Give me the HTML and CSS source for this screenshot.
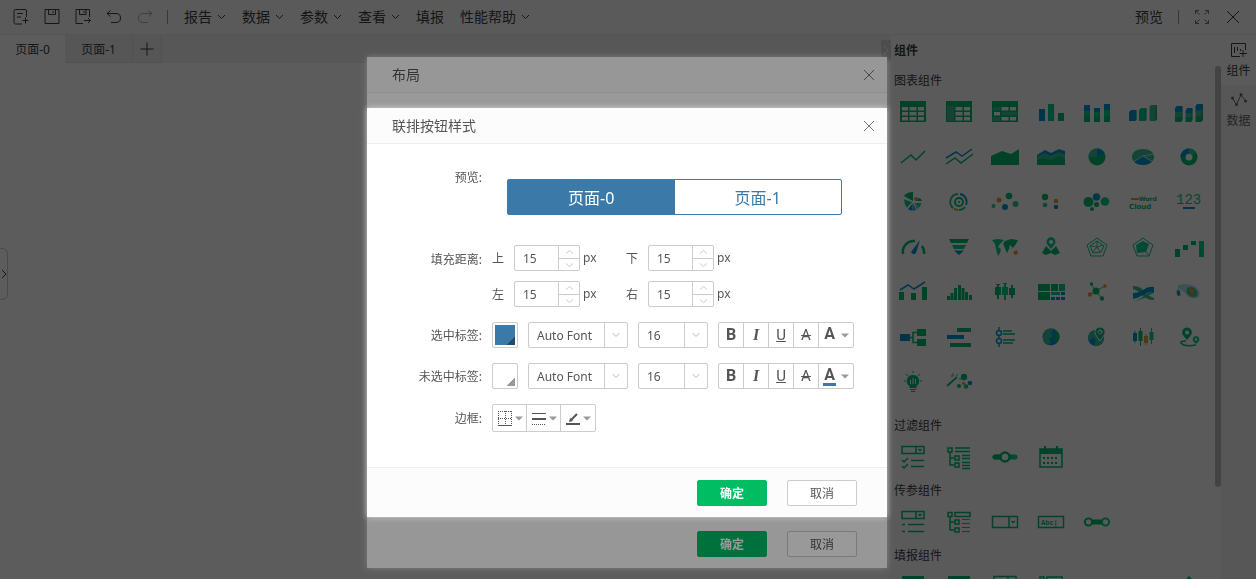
FILE: index.html
```html
<!DOCTYPE html>
<html lang="zh-CN">
<head>
<meta charset="utf-8">
<meta name="viewport" content="initial-scale=1.0, width=device-width">
<title>联排按钮样式</title>
<link rel="stylesheet" href="styles.css">
</head>
<body>

<div class="app">

<header class="toolbar">
  <button type="button" class="tool" aria-label="新建"><svg width="18" height="18" viewBox="0 0 18 18"><path d="M10 16H3.500Q2 16 2 14.500V3Q2 1.500 3.500 1.500H13Q14.500 1.500 14.500 3V9M5 5.500H11M5 9H9M10.500 12.500H16.500M13.500 9.500V15.500"/></svg></button>
  <button type="button" class="tool" aria-label="保存"><svg width="18" height="18" viewBox="0 0 18 18"><path d="M2 1.500H16V15.500H2ZM5.500 1.500V6.500H12.500V1.500M10 3V5"/></svg></button>
  <button type="button" class="tool" aria-label="另存为"><svg width="18" height="18" viewBox="0 0 18 18"><path d="M9 15.500H2V1.500H15.500V9M5.500 1.500V6.500H12V1.500M10 3V5M10 12.500H16.500M14 10L16.500 12.500L14 15"/></svg></button>
  <button type="button" class="tool" aria-label="撤销"><svg width="18" height="18" viewBox="0 0 18 18"><path d="M5.500 2.500L2 5.500L5.500 8.500M2 5.500H11Q15.500 5.500 15.500 10Q15.500 14.500 11 14.500H6"/></svg></button>
  <button type="button" class="tool off" aria-label="重做"><svg width="18" height="18" viewBox="0 0 18 18"><path d="M12.500 2.500L16 5.500L12.500 8.500M16 5.500H7Q2.500 5.500 2.500 10Q2.500 14.500 7 14.500H12"/></svg></button>
  <span class="sep"></span>
  <nav class="menus">
    <button type="button">报告<svg width="9" height="6" viewBox="0 0 9 6"><path d="M1 1L4.500 4.500L8 1"/></svg></button>
    <button type="button">数据<svg width="9" height="6" viewBox="0 0 9 6"><path d="M1 1L4.500 4.500L8 1"/></svg></button>
    <button type="button">参数<svg width="9" height="6" viewBox="0 0 9 6"><path d="M1 1L4.500 4.500L8 1"/></svg></button>
    <button type="button">查看<svg width="9" height="6" viewBox="0 0 9 6"><path d="M1 1L4.500 4.500L8 1"/></svg></button>
    <button type="button">填报</button>
    <button type="button">性能帮助<svg width="9" height="6" viewBox="0 0 9 6"><path d="M1 1L4.500 4.500L8 1"/></svg></button>
  </nav>
  <div class="right">
    <button type="button">预览</button>
    <span class="sep"></span>
    <button type="button" class="dim" aria-label="全屏"><svg width="16" height="16" viewBox="0 0 16 16"><path d="M1.500 5V1.500H5M1.500 1.500L5.500 5.500M11 1.500H14.500V5M14.500 1.500L10.500 5.500M1.500 11V14.500H5M1.500 14.500L5.500 10.500M11 14.500H14.500V11M14.500 14.500L10.500 10.500"/></svg></button>
    <button type="button" aria-label="关闭"><svg width="16" height="16" viewBox="0 0 16 16"><path d="M2 2L14 14M14 2L2 14"/></svg></button>
  </div>
</header>

<div class="work">
  <main class="canvas">
    <div class="tabs">
      <button type="button" class="on">页面-0</button>
      <button type="button">页面-1</button>
      <button type="button" class="add" aria-label="添加页面"><svg width="14" height="14" viewBox="0 0 14 14"><path d="M7 0.500V13.500M0.500 7H13.500"/></svg></button>
    </div>
    <button type="button" class="drawer" aria-label="展开"><svg width="6" height="10" viewBox="0 0 6 10"><path d="M1 1L5 5L1 9"/></svg></button>
    <button type="button" class="fold" aria-label="收起"><svg width="6" height="10" viewBox="0 0 6 10"><path d="M1 1L5 5L1 9"/></svg></button>
  </main>

  <aside class="panel">
    <h2>组件</h2>
    <h3>图表组件</h3>
    <div class="icons charts">
      <svg viewBox="0 0 28 24"><path class="g" fill-rule="evenodd" d="M1 1H27V22H1ZM3 7V10.500H9V7ZM10.500 7V10.500H17.500V7ZM19 7V10.500H25V7ZM3 12V15.500H9V12ZM10.500 12V15.500H17.500V12ZM19 12V15.500H25V12ZM3 17V20.500H9V17ZM10.500 17V20.500H17.500V17ZM19 17V20.500H25V17Z"/></svg>
      <svg viewBox="0 0 28 24"><path class="g" fill-rule="evenodd" d="M1 1H27V22H1ZM10.500 7V10.500H17.500V7ZM19 7V10.500H25V7ZM10.500 12V15.500H17.500V12ZM19 12V15.500H25V12ZM10.500 17V20.500H17.500V17ZM19 17V20.500H25V17Z"/><path class="l" d="M2 6H9V21H2Z"/></svg>
      <svg viewBox="0 0 28 24"><path class="g" fill-rule="evenodd" d="M1 1H27V22H1ZM10.500 7V10.500H17.500V7ZM19 7V10.500H25V7ZM3 12V15.500H9V12ZM10.500 17V20.500H17.500V17ZM19 17V20.500H25V17Z"/><path class="l" d="M2 7H9V10.500H2ZM10.500 12H26V15.500H10.500ZM2 17H9V21H2Z"/></svg>
      <svg viewBox="0 0 28 24"><path class="b" d="M2 9H8V21H2Z"/><path class="m" d="M11 4H17V21H11Z"/><path class="g" d="M21 13H27V21H21Z"/></svg>
      <svg viewBox="0 0 28 24"><path class="b" d="M1 5H7V11H1ZM11 8H17V12H11ZM21 4H27V10H21Z"/><path class="m" d="M1 11H7V16H1ZM11 12H17V16H11ZM21 10H27V16H21Z"/><path class="g" d="M1 16H7V22H1ZM11 16H17V22H11ZM21 16H27V22H21Z"/></svg>
      <svg viewBox="0 0 28 24"><path class="b" d="M0 12L2 10H7.500V20L6 21H0Z"/><path class="m" d="M10 10L12 8H17.500V20L16 21H10Z"/><path class="l" d="M20.500 7L22 5H28V20L26 21H20.500Z"/><path class="d" d="M6 12L7.500 10V20L6 21ZM16 10L17.500 8V20L16 21ZM26 7L28 5V20L26 21Z"/></svg>
      <svg viewBox="0 0 28 24"><path class="b" d="M0 8L2 6H7.500V12H0ZM10.500 11L12 8H17.500V13H10.500ZM20.500 6L22 4H28V10L20.500 12Z"/><path class="l" d="M0 12H7.500V17H0ZM10.500 13H17.500V17H10.500ZM20.500 11L28 10V16H20.500Z"/><path class="g" d="M0 17H7.500V20L6 22H0ZM10.500 17H17.500V20L16 22H10.500ZM20.500 16H28V20L26 22H20.500Z"/><path class="d" d="M6 8L7.500 6V20L6 22ZM16 11L17.500 8V20L16 22ZM26 6L28 4V20L26 22Z"/></svg>

      <svg viewBox="0 0 28 24"><path class="gs" d="M2 18L12 10L17 15L26 6"/></svg>
      <svg viewBox="0 0 28 24"><path class="bs" d="M1 13L11 7L17 11L27 4"/><path class="gs" d="M1 19L10 13L16 18L28 9"/></svg>
      <svg viewBox="0 0 28 24"><path class="g" d="M0 11L11 6L20 9L28 4V20H0Z"/></svg>
      <svg viewBox="0 0 28 24"><path class="b" d="M0 10L8 5L14 8L22 4L28 6V13H0Z"/><path class="l" d="M0 12L7 8L14 11L22 7L28 10V17H0Z"/><path class="g" d="M0 15L7 13L14 15L22 11L28 14V20H0Z"/></svg>
      <svg viewBox="0 0 28 24"><circle class="g" cx="14" cy="12" r="8.500"/><path class="l" d="M14 12V3.500A8.500 8.500 0 0 0 5.500 12Z"/><path class="b" d="M14 12V3.500A8.500 8.500 0 0 1 21.500 8Z"/></svg>
      <svg viewBox="0 0 28 24"><ellipse class="m" cx="14" cy="12.500" rx="11" ry="7.500"/><ellipse class="l" cx="14" cy="11" rx="11" ry="7"/><path class="b" d="M14 11L5 17Q14 23 23 17Z"/><path class="hair" d="M14 11L4 17M14 11L24 17M14 11L25 9"/></svg>
      <svg viewBox="0 0 28 24"><circle class="ring g" cx="14" cy="12" r="6"/><path class="ring l" d="M14 6A6 6 0 0 1 19 9"/><path class="ring b" d="M8 12A6 6 0 0 1 14 6"/></svg>

      <svg viewBox="0 0 28 24"><path class="g" d="M14 11L5 6Q8 2 14 2Z"/><path class="m" d="M13 12L5 9Q5 14 8 18Z"/><path class="b" d="M14 13L9 19Q13 22 17 20Z"/><path class="l" d="M15 13L18 19Q22 17 22 13Z"/><path class="g" d="M16 11H23Q22 8 20 8Z"/><circle class="o" cx="17" cy="9" r="2"/><path class="hair" d="M14 12L5 9M14 12L8 18M14 12L14 21M14 12L20 18M14 12H22"/></svg>
      <svg viewBox="0 0 28 24"><circle class="line2 g" cx="14" cy="12" r="4"/><path class="line2 m" d="M13 4A8 8 0 0 0 8 18"/><path class="line2 b" d="M15 4A8 8 0 0 1 21 15"/><path class="line2 g" d="M20 17A8 8 0 0 1 14 20"/><path class="line2 o" d="M9 18.500A8 8 0 0 0 13 20"/><circle class="g" cx="14" cy="12" r="1"/></svg>
      <svg viewBox="0 0 28 24"><circle class="l" cx="2.500" cy="16" r="2"/><circle class="o" cx="8" cy="10" r="2.500"/><circle class="b" cx="14" cy="17" r="3"/><circle class="g" cx="18" cy="6" r="3.300"/><circle class="l" cx="24.500" cy="14" r="3"/></svg>
      <svg viewBox="0 0 28 24"><circle class="g" cx="8" cy="7" r="3.200"/><circle class="l" cx="8" cy="15" r="2.300"/><circle class="o" cx="19" cy="11" r="2.300"/><circle class="b" cx="19" cy="17" r="2.300"/></svg>
      <svg viewBox="0 0 28 24"><circle class="g" cx="5.500" cy="12" r="5"/><circle class="b" cx="13.500" cy="7" r="3.700"/><circle class="m" cx="22" cy="11.500" r="4.300"/><circle class="g" cx="13.500" cy="14.500" r="2.600"/><circle class="g" cx="9" cy="19" r="2"/></svg>
      <svg viewBox="0 0 28 24"><path class="o" d="M2 8H10V10H2Z"/><text class="g cloud" x="10" y="11" font-size="6">Word</text><text class="g cloud" x="0" y="19" font-size="7">Cloud</text></svg>
      <svg viewBox="0 0 28 24"><text class="m num" x="1" y="14" font-size="14">123</text><path class="b" d="M8 17H20V19H8Z"/></svg>

      <svg viewBox="0 0 28 24"><path class="gauge g" d="M4 19A11 11 0 0 1 16 6"/><path class="gauge g" d="M23 11A11 11 0 0 1 25 19"/><path class="b" d="M21 5L17 18Q14 21 12 17Z"/></svg>
      <svg viewBox="0 0 28 24"><path class="g" d="M4 4H24L22 8H6Z"/><path class="m" d="M7 10H21L19 14H9Z"/><path class="b" d="M9 15.500H19L14 20Z"/></svg>
      <svg viewBox="0 0 28 24"><path class="m" d="M1 5L7 4L13 5L9 9L7 12L10 14L9 18L7 21L5 14L4 9Z"/><path class="g" d="M14 6L20 4L27 5L25 9L22 13L19 10L18 14L16 18L13 11L12 9Z"/><path class="o" d="M22 17L26 15L27 19L24 20Z"/></svg>
      <svg viewBox="0 0 28 24"><path class="m" fill-rule="evenodd" d="M14 2A5 5 0 0 1 18 9L14 14L10 9A5 5 0 0 1 14 2ZM14 5A2 2 0 1 0 14.100 5Z"/><path class="g" d="M9 11L14 16L19 11L23 18L18 20L14 18L9 20L5 18Z"/></svg>
      <svg viewBox="0 0 28 24"><path class="line1 m" d="M14 3L24 10L20 21H8L4 10ZM14 6L21 11L18 17L10 18L7 11Z"/><path class="line1 l" d="M14 7V12L20 10M14 12L17 17M14 12L10 17M14 12L8 11"/></svg>
      <svg viewBox="0 0 28 24"><path class="line1 m" d="M14 3L24 10L20 21H8L4 10Z"/><path class="m" d="M14 6L20 9L17 17L8 18L7 10Z"/><path class="line1 l" d="M17 17L20 21"/></svg>
      <svg viewBox="0 0 28 24"><path class="g" d="M0 14H5V22H0ZM8 10H13V15H8ZM16 6H21V10H16Z"/><path class="m" d="M24 6H29V22H24Z"/></svg>

      <svg viewBox="0 0 28 24"><path class="bs" d="M1 10L9 5L15 9L26 2"/><path class="g" d="M0 12H5V20H0ZM12 13H17V20H12ZM23 7H28V20H23Z"/></svg>
      <svg viewBox="0 0 28 24"><path class="g" d="M2 16H5V20H2ZM5.500 13H8.500V20H5.500ZM9 8H12V20H9ZM13 5H16V20H13ZM16.500 8H19.500V20H16.500ZM20 12H23V20H20ZM24 15H27V20H24Z"/></svg>
      <svg viewBox="0 0 28 24"><path class="g" d="M4 7H10V15H4ZM6 4H8V19H6ZM5 4H9V5H5ZM18 8H24V15H18ZM20 5H22V18H20Z"/><path class="m" d="M11 7H17V15H11ZM13 3H15V20H13ZM12 3H16V4H12Z"/></svg>
      <svg viewBox="0 0 28 24"><path class="g" d="M1 4H13V11H1ZM1 12H13V20H1ZM14 4H21V11H14Z"/><path class="m" d="M22 4H28V11H22ZM14 12H23V15H14Z"/><path class="b" d="M24 12H28V15H24ZM14 17H18V20H14ZM19 17H23V20H19ZM24 17H28V20H24Z"/></svg>
      <svg viewBox="0 0 28 24"><path class="line1 l" d="M13 11L8 4M13 11L22 6M13 11L7 15M13 11L19 19"/><circle class="g" cx="13" cy="11" r="3.500"/><circle class="g" cx="8.500" cy="4" r="1.700"/><circle class="o" cx="22" cy="6" r="1.700"/><circle class="o" cx="7" cy="14.500" r="2.200"/><circle class="g" cx="19" cy="18.500" r="2.200"/></svg>
      <svg viewBox="0 0 28 24"><path class="l" d="M4 6Q11 6 15 11Q19 16 25 18V20Q17 20 12 14Q8 10 4 9Z"/><path class="b" d="M25 7V12Q18 12 14 15Q9 18 4 19V13Q10 13 14 10Q19 6 25 7Z"/><path class="l" d="M4 21Q11 20 15 16Q19 12 25 12V13Q19 15 15 18Q10 21 4 21Z"/></svg>
      <svg viewBox="0 0 28 24"><path class="haze" d="M3 5Q13 2 21 7Q28 14 22 18Q14 20 9 12L3 8ZM2 8Q6 11 6 16Q4 18 1 13Z"/><ellipse class="l" cx="17" cy="12" rx="6" ry="4.500" transform="rotate(35 17 12)"/><path class="o" d="M14 8Q21 9 19 14Q15 15 14 8Z"/><ellipse class="b" cx="3.500" cy="13" rx="1.500" ry="3"/></svg>

      <svg viewBox="0 0 28 24"><path class="b" d="M1 9H11V16H1Z"/><path class="gs" d="M11 12.500H14M18 7.500H14V17.500H18"/><path class="g" d="M18 4H27V11H18ZM18 14H27V21H18Z"/></svg>
      <svg viewBox="0 0 28 24"><path class="g" d="M12 3H26V7H12ZM5 18H26V22H5Z"/><path class="b" d="M2 10H19V14H2Z"/></svg>
      <svg viewBox="0 0 28 24"><path class="gs" d="M8 2V22M12 6H21M12 9H24M12 15H24M12 18H22"/><circle class="node" cx="8" cy="8" r="2.500"/><circle class="node" cx="8" cy="16" r="2.500"/></svg>
      <svg viewBox="0 0 28 24"><circle class="b" cx="14" cy="12" r="8.500"/><path class="l" d="M7 7Q11 2 17 4L14 8L16 11L12 14L14 18L11 20Q6 18 6 14Z"/><path class="g" d="M17 4Q23 7 22.500 13L19 17L16 12L19 9Z"/></svg>
      <svg viewBox="0 0 28 24"><circle class="b" cx="13" cy="13" r="8"/><path class="l" d="M9 6Q4 10 6 16L10 12L13 15L11 21Q19 21 21 15L15 11Z"/><path class="g edge" fill-rule="evenodd" d="M17 2A5 5 0 0 1 21.500 9.500L17 16L12.500 9.500A5 5 0 0 1 17 2ZM17 5A2 2 0 1 0 17.100 5Z"/></svg>
      <svg viewBox="0 0 28 24"><path class="b" d="M4 8H8V16H4ZM5.500 6H6.500V18H5.500Z"/><path class="g" d="M9.500 6H13.500V16H9.500ZM11 3H12V21H11Z"/><path class="o" d="M15 11H19V18H15ZM16.500 9H17.500V20H16.500Z"/><path class="m" d="M20.500 7H24.500V15H20.500ZM22 3H23V19H22Z"/></svg>
      <svg viewBox="0 0 28 24"><path class="g" fill-rule="evenodd" d="M12 2.500A5 5 0 0 1 16.500 9.500L12 15L7.500 9.500A5 5 0 0 1 12 2.500ZM12 5.500A2 2 0 1 0 12.100 5.500Z"/><path class="m" fill-rule="evenodd" d="M21 11A3.500 3.500 0 0 1 24 16L21 19L18 16A3.500 3.500 0 0 1 21 11ZM21 13A1.300 1.300 0 1 0 21.100 13Z"/><path class="gs" d="M11 16Q5 16 6 18Q9 22 21 20"/></svg>

      <svg viewBox="0 0 28 24"><path class="g" d="M14 5A6 6 0 0 1 17.500 16V18H10.500V16A6 6 0 0 1 14 5ZM11 19H17V20H11ZM12 21H16V22H12Z"/><path class="line1 g" d="M14 1V3M7 4L9 6M21 4L19 6M5 11H7M21 11H23"/><path class="bg" d="M11 10H12V14H11ZM13.500 8H14.500V14H13.500ZM16 9H17V14H16Z"/></svg>
      <svg viewBox="0 0 28 24"><path class="line2 g" d="M2 16L12 7"/><path class="line1 m" d="M8 3V6M13 4L11 6M14 9H16"/><circle class="g" cx="19" cy="7" r="3.200"/><circle class="o" cx="18.500" cy="13.500" r="1.600"/><circle class="b" cx="25" cy="13" r="2.300"/><circle class="g" cx="14" cy="16" r="2.100"/><circle class="m" cx="21" cy="16.500" r="2.200"/><circle class="o" cx="7" cy="6" r="1"/></svg>
    </div>

    <h3>过滤组件</h3>
    <div class="icons">
      <svg viewBox="0 0 28 24"><path class="gs" d="M3 1.500H25V8.500H3ZM17 1.500V8.500M19.500 4L21 5.500L22.500 4M3 15L5 17L9 13M12 15.500H25M3 21L5 23L9 19M12 21.500H25"/></svg>
      <svg viewBox="0 0 28 24"><path class="gs" d="M3 3H7V7H3ZM10 3H25M10 6.500H25M5 7V20H9M5 13H9M10 11H14V15H10ZM10 18H14V22H10ZM17 10.500H25M17 13.500H25M17 17.500H25M17 20.500H25M17 23.500H25"/></svg>
      <svg viewBox="0 0 28 24"><path class="thick m" d="M4 12H24"/><path class="thick g" d="M4 12H9"/><circle class="knob" cx="14" cy="12" r="4.500"/></svg>
      <svg viewBox="0 0 28 24"><path class="gs" d="M3 4H25V22H3Z"/><path class="g" d="M3 4H25V9H3ZM7 1H9V6H7ZM19 1H21V6H19ZM6 12H8V14H6ZM10 12H12V14H10ZM14 12H16V14H14ZM18 12H20V14H18ZM6 17H8V19H6ZM10 17H12V19H10ZM14 17H16V19H14ZM18 17H20V19H18Z"/></svg>
    </div>

    <h3>传参组件</h3>
    <div class="icons">
      <svg viewBox="0 0 28 24"><path class="gs" d="M3 1.500H25V8.500H3ZM17 1.500V8.500M19.500 4L21 5.500L22.500 4M3 14.500H6M9 14.500H25M3 21.500H6M9 21.500H25"/></svg>
      <svg viewBox="0 0 28 24"><path class="gs" d="M3 2.500H7V6.500H3ZM10 2.500H25V6.500H10ZM5 7V20H9M5 12H9M10 10H14V14H10ZM10 18H14V22H10Z"/><path class="line1 m" d="M17 9.500H25M17 13.500H25M17 17.500H25M17 21.500H25"/></svg>
      <svg viewBox="0 0 28 24"><path class="gs" d="M1.500 6.500H26.500V17.500H1.500ZM18 6.500V17.500M20.500 11L22 12.500L24 11"/></svg>
      <svg viewBox="0 0 28 24"><path class="gs" d="M1.500 6.500H26.500V17.500H1.500Z"/><text class="g mono" x="4" y="15" font-size="7">Abc|</text></svg>
      <svg viewBox="0 0 28 24"><path class="thick g" d="M10 12H18"/><circle class="loop g" cx="5.500" cy="12" r="3.500"/><circle class="loop m" cx="22.500" cy="12" r="3.500"/><circle class="bg" cx="5.500" cy="12" r="2.500"/><circle class="bg" cx="22.500" cy="12" r="2.500"/></svg>
    </div>

    <h3>填报组件</h3>
    <div class="icons">
      <svg viewBox="0 0 28 24"><path class="g" d="M3 1H25V22H3Z"/></svg>
      <svg viewBox="0 0 28 24"><path class="g" d="M3 1H25V22H3Z"/></svg>
      <svg viewBox="0 0 28 24"><path class="gs" d="M3 1.500H25V10H3ZM17 1.500V10"/></svg>
      <svg viewBox="0 0 28 24"><path class="gs" d="M3 2H7V6H3ZM10 2H25V6H10Z"/></svg>
      <svg viewBox="0 0 28 24"></svg>
      <svg viewBox="0 0 28 24"></svg>
      <svg viewBox="0 0 28 24"><path class="g" d="M14 1L18 5V20H10V5Z"/></svg>
    </div>
    <span class="thumb"></span>
  </aside>

  <div class="side">
    <button type="button" class="on"><svg width="18" height="16" viewBox="0 0 18 16"><path d="M10 14.500H1.500V1.500H15.500V8M4.500 5V11M7.500 5V9M10.500 7V9M13 8V15M9.500 11.500H17"/></svg>组件</button>
    <button type="button"><svg width="18" height="16" viewBox="0 0 18 16"><path d="M2.500 6.500L6.500 12.500L11 3L15.500 8.500"/><circle class="dot" cx="2.500" cy="6" r="1.500"/><circle class="dot" cx="6.500" cy="12.500" r="1.500"/><circle class="dot" cx="11" cy="2.500" r="1.500"/><circle class="dot" cx="15.500" cy="9" r="1.500"/></svg>数据</button>
  </div>
</div>
</div>

<div class="mask">
  <section class="dialog layout">
    <header><h1>布局</h1><button type="button" aria-label="关闭"><svg width="12" height="12" viewBox="0 0 12 12"><path d="M1 1L11 11M11 1L1 11"/></svg></button></header>
    <div class="body"></div>
    <footer><button type="button" class="ok">确定</button><button type="button" class="cancel">取消</button></footer>
  </section>
</div>

<div class="mask top">
  <section class="dialog">
    <header><h1>联排按钮样式</h1><button type="button" aria-label="关闭"><svg width="12" height="12" viewBox="0 0 12 12"><path d="M1 1L11 11M11 1L1 11"/></svg></button></header>
    <form class="body">
      <div class="row preview">
        <span class="label">预览:</span>
        <div class="seg"><button type="button" class="on">页面-0</button><button type="button">页面-1</button></div>
      </div>

      <div class="row pad">
        <span class="label">填充距离:</span>
        <div class="pads">
          <div class="spin"><label for="top">上</label><span class="num-box"><input id="top" type="text" value="15"><button type="button" aria-label="加"><svg width="9" height="6" viewBox="0 0 9 6"><path d="M1 4.500L4.500 1.500L8 4.500"/></svg></button><button type="button" aria-label="减"><svg width="9" height="6" viewBox="0 0 9 6"><path d="M1 1.500L4.500 4.500L8 1.500"/></svg></button></span>px</div>
          <div class="spin"><label for="bottom">下</label><span class="num-box"><input id="bottom" type="text" value="15"><button type="button" aria-label="加"><svg width="9" height="6" viewBox="0 0 9 6"><path d="M1 4.500L4.500 1.500L8 4.500"/></svg></button><button type="button" aria-label="减"><svg width="9" height="6" viewBox="0 0 9 6"><path d="M1 1.500L4.500 4.500L8 1.500"/></svg></button></span>px</div>
          <div class="spin"><label for="left">左</label><span class="num-box"><input id="left" type="text" value="15"><button type="button" aria-label="加"><svg width="9" height="6" viewBox="0 0 9 6"><path d="M1 4.500L4.500 1.500L8 4.500"/></svg></button><button type="button" aria-label="减"><svg width="9" height="6" viewBox="0 0 9 6"><path d="M1 1.500L4.500 4.500L8 1.500"/></svg></button></span>px</div>
          <div class="spin"><label for="right">右</label><span class="num-box"><input id="right" type="text" value="15"><button type="button" aria-label="加"><svg width="9" height="6" viewBox="0 0 9 6"><path d="M1 4.500L4.500 1.500L8 4.500"/></svg></button><button type="button" aria-label="减"><svg width="9" height="6" viewBox="0 0 9 6"><path d="M1 1.500L4.500 4.500L8 1.500"/></svg></button></span>px</div>
        </div>
      </div>

      <div class="row">
        <label class="label" for="font-on">选中标签:</label>
        <button type="button" class="swatch blue" aria-label="颜色"><i></i></button>
        <span class="drop"><select id="font-on"><option>Auto Font</option></select><svg width="9" height="6" viewBox="0 0 9 6"><path d="M1 1L4.500 4.500L8 1"/></svg></span>
        <span class="drop size"><select aria-label="字号"><option>16</option></select><svg width="9" height="6" viewBox="0 0 9 6"><path d="M1 1L4.500 4.500L8 1"/></svg></span>
        <div class="group">
          <button type="button"><b>B</b></button><button type="button"><em>I</em></button><button type="button"><u>U</u></button><button type="button"><s>A</s></button><button type="button" class="wide"><b class="ink">A</b><svg class="caret" width="8" height="5" viewBox="0 0 8 5"><path d="M0 0.500H8L4 4.500Z"/></svg></button>
        </div>
      </div>

      <div class="row">
        <label class="label" for="font-off">未选中标签:</label>
        <button type="button" class="swatch" aria-label="颜色"><i></i></button>
        <span class="drop"><select id="font-off"><option>Auto Font</option></select><svg width="9" height="6" viewBox="0 0 9 6"><path d="M1 1L4.500 4.500L8 1"/></svg></span>
        <span class="drop size"><select aria-label="字号"><option>16</option></select><svg width="9" height="6" viewBox="0 0 9 6"><path d="M1 1L4.500 4.500L8 1"/></svg></span>
        <div class="group">
          <button type="button"><b>B</b></button><button type="button"><em>I</em></button><button type="button"><u>U</u></button><button type="button"><s>A</s></button><button type="button" class="wide"><b class="ink under">A</b><svg class="caret" width="8" height="5" viewBox="0 0 8 5"><path d="M0 0.500H8L4 4.500Z"/></svg></button>
        </div>
      </div>

      <div class="row">
        <span class="label">边框:</span>
        <div class="group borders">
          <button type="button" aria-label="边框位置"><svg width="16" height="16" viewBox="0 0 16 16"><path class="dots" d="M1 1.500H15M1 8.500H15M1.500 1V14M8.500 1V14M14.500 1V14"/><path d="M1 15.500H15"/></svg><svg class="caret" width="8" height="5" viewBox="0 0 8 5"><path d="M0 0.500H8L4 4.500Z"/></svg></button><button type="button" aria-label="线型"><svg width="16" height="16" viewBox="0 0 16 16"><path d="M1 3.500H15"/><path class="bold" d="M1 9H15"/><path class="dots" d="M1 14.500H15"/></svg><svg class="caret" width="8" height="5" viewBox="0 0 8 5"><path d="M0 0.500H8L4 4.500Z"/></svg></button><button type="button" aria-label="线条颜色"><svg width="16" height="16" viewBox="0 0 16 16"><path class="bold" d="M1 14H15M6 10L12 4"/><path class="solid" d="M4 12L5 8L8 11Z"/></svg><svg class="caret" width="8" height="5" viewBox="0 0 8 5"><path d="M0 0.500H8L4 4.500Z"/></svg></button>
        </div>
      </div>
    </form>
    <footer><button type="button" class="ok">确定</button><button type="button" class="cancel">取消</button></footer>
  </section>
</div>

</body>
</html>
```

FILE: styles.css
```css
html,body,h1,h2,h3{margin:0;padding:0;}
*{box-sizing:border-box;}
body{
  color:#3d3d3d;
  font:12px/20px "Noto Sans","Noto Sans CJK SC",sans-serif;
  background:#fff;
  overflow:hidden;
}
button,input,select{font:inherit;color:inherit;margin:0;padding:0;border:0;background:none;border-radius:0;outline:none;}
button{display:flex;align-items:center;justify-content:center;flex:none;}
svg{fill:none;stroke:currentColor;flex:none;display:block;}

/* editor */
.app{height:100vh;display:flex;flex-direction:column;isolation:isolate;}
.toolbar{
  height:35px;
  flex:none;
  display:flex;
  align-items:center;
  padding:0 15px 0 12px;
  font-size:14px;
  background:#f9fafc;
  border-bottom:1px solid #eaebed;
}
.tool{width:18px;margin-right:13px;}
.off{opacity:0.4;}
.dim{color:#777;}
.sep{width:1px;height:14px;background:#999;}
.menus{display:flex;gap:16px;margin-left:16px;}
.menus button{gap:5px;}
.right{display:flex;align-items:center;gap:15px;margin-left:auto;}
.work{flex:1;min-height:0;display:flex;}
.canvas{flex:1;position:relative;background:#fff;}
.tabs{display:flex;height:28px;background:#f1f1f1;}
.tabs button{width:68px;padding-top:2px;background:#ededed;border:solid #e0e0e0;border-width:0 1px 1px 0;}
.tabs .on{width:65px;background:#fff;border:0;}
.tabs .add{width:29px;padding-top:0;}
.drawer{
  position:absolute;left:0;top:213px;
  width:8px;height:52px;
  border:1px solid #ccc;border-left:0;border-radius:0 6px 6px 0;
}
.fold{
  position:absolute;right:-1px;top:5px;z-index:1;
  width:10px;height:20px;
  color:#fff;background:#d4d4d4;
}
.panel{
  position:relative;
  flex:none;
  width:331px;
  overflow:hidden;
  background:#f9fafc;
}
.panel h2{font-size:12px;padding:6px 4px 0;height:34px;}
.panel h3{font-size:12px;font-weight:normal;padding:2px 4px 0;height:20px;}
.icons{display:grid;grid-template-columns:repeat(7,46px);grid-auto-rows:45px;place-items:center;}
.charts{margin-bottom:10px;}
.icons svg{width:28px;height:24px;stroke:none;overflow:visible;}
.thumb{position:absolute;right:0;top:31px;width:6px;height:421px;border-radius:3px;background:#bbb;}
.side{flex:none;width:35px;background:#f0f2f0;}
.side button{width:100%;height:50px;padding-top:2px;flex-direction:column;gap:3px;color:#666;}
.side .on{background:#f9fafc;color:#3d3d3d;}
.dot{fill:#666;stroke:none;}

.g{fill:#00bb70;}
.m{fill:#00c98a;}
.l{fill:#36bd92;}
.d{fill:#009b5c;opacity:0.4;}
.b{fill:#0097d2;}
.o{fill:#dc9a2e;}
.bg{fill:#f9fafc;}
.haze{fill:#3cb4c4;opacity:0.4;}
.gs{stroke:#00bb70;stroke-width:1.5;}
.bs{stroke:#0097d2;stroke-width:1.5;}
.hair{stroke:#f9fafc;stroke-width:0.7;}
.edge{stroke:#f9fafc;stroke-width:1;}
.node{fill:#f9fafc;stroke:#0097d2;stroke-width:1.5;}
.ring,.gauge,.line1,.line2,.thick,.loop{fill:none;stroke:#00bb70;}
.ring{stroke-width:5;}
.gauge{stroke-width:2.5;}
.line1{stroke-width:1;}
.line2{stroke-width:1.8;}
.thick{stroke-width:5;stroke-linecap:round;}
.loop{stroke-width:2.2;}
.knob{fill:#f9fafc;stroke:#00bb70;stroke-width:2.5;}
.m.line1,.m.line2,.m.thick,.m.loop{stroke:#00c98a;}
.l.ring,.l.line1{stroke:#36bd92;}
.b.ring,.b.line2{stroke:#0097d2;}
.o.line2{stroke:#dc9a2e;}
.cloud{font-family:"DejaVu Sans",sans-serif;font-weight:bold;}
.num,.mono{font-family:"Liberation Mono",monospace;}
.mono{font-weight:bold;}

/* dialogs */
.mask{
  position:fixed;left:0;top:0;right:0;bottom:0;
  display:flex;
  align-items:flex-start;
  justify-content:center;
  padding:57px 2px 0 0;
  background:rgba(0,0,0,0.4);
}
.mask.top{padding-top:108px;}
.dialog{
  width:520px;
  color:#555;
  background:#fff;
  box-shadow:0 0 6px rgba(255,255,255,0.6);
}
.layout .body{height:425px;padding:0;}
.dialog header{
  display:flex;
  align-items:center;
  justify-content:space-between;
  height:36px;
  padding:0 12px 0 25px;
  background:#fcfcfc;
  border-bottom:1px solid #eee;
}
.dialog header button{color:#777;}
h1{font-size:14px;font-weight:normal;}
.body{display:flex;flex-direction:column;gap:15px;padding:35px 30px 35px 0;}
.row{display:flex;align-items:center;gap:10px;}
.label{width:115px;flex:none;padding-top:2px;text-align:right;}
.preview{align-items:flex-start;margin-bottom:15px;}
.preview .label{margin-top:-13px;}
.seg{
  display:flex;
  flex:1;
  height:36px;
  margin:0 15px;
  font-size:16px;
  color:#3b79a8;
  border:1px solid #3b79a8;
  border-radius:2px;
}
.seg button{flex:1;padding-top:2px;}
.seg .on{color:#fff;background:#3b79a8;}
.pad{align-items:flex-start;}
.pad .label{line-height:25px;}
.pads{display:grid;grid-template-columns:134px 134px;row-gap:10px;}
.spin{display:flex;align-items:center;gap:3px;}
.spin label{width:19px;padding-top:2px;}
.num-box{
  display:grid;
  grid-template-columns:43px 21px;
  grid-template-rows:12px 12px;
  width:66px;
  height:26px;
  border:1px solid #ccc;
  border-radius:2px;
}
.num-box input{grid-row:1 / 3;width:43px;padding:2px 0 0 8px;}
.num-box button{color:#ccc;border-left:1px solid #ccc;}
.num-box button:last-child{border-top:1px solid #ccc;}
.swatch{width:26px;height:26px;padding:2px;border:1px solid #ccc;border-radius:2px;}
.swatch i{
  flex:1;height:20px;
  background:linear-gradient(135deg,transparent 80%,#999 80%);
}
.blue i{background:linear-gradient(135deg,#3b79a8 80%,#24496a 80%);}
.drop{
  display:flex;
  align-items:center;
  position:relative;
  width:100px;
  height:26px;
  border:1px solid #ccc;
  border-radius:2px;
}
.size{width:70px;}
.drop select{appearance:none;width:100%;height:24px;padding:2px 0 0 8px;}
.drop svg{
  position:absolute;right:0;top:0;
  width:23px;height:24px;padding:9px 6px;
  color:#bbb;
  border-left:1px solid #ccc;
  pointer-events:none;
}
.group{display:flex;height:26px;border:1px solid #ccc;border-radius:2px;}
.group button{width:25px;font:16px/20px Roboto,"Liberation Sans",sans-serif;}
.group button:first-child{width:24px;}
.group button + button{border-left:1px solid #ccc;}
.group .wide{width:35px;gap:5px;}
.group em{font:italic bold 16px/20px "Liberation Serif",serif;}
.group u,.group s{font-size:15px;}
.ink{height:20px;padding:0 1px;line-height:17px;}
.under{border-bottom:3px solid #3b79a8;}
.caret{stroke:none;fill:#999;}
.borders{height:28px;}
.borders button{width:34px;gap:2px;}
.borders button:first-child{width:33px;}
.borders button:last-child{width:35px;}
.dots{stroke-dasharray:1 1;}
.bold{stroke-width:2;}
.solid{fill:#555;stroke:none;}
.dialog footer{
  display:flex;
  align-items:center;
  justify-content:flex-end;
  gap:20px;
  height:50px;
  padding-right:30px;
  background:#fcfcfc;
  border-top:1px solid #eee;
}
.ok,.cancel{width:70px;height:26px;padding-top:2px;border:1px solid #ccc;border-radius:2px;background:#fff;}
.ok{color:#fff;font-weight:bold;background:#00bd64;border-color:#00bd64;}
```
